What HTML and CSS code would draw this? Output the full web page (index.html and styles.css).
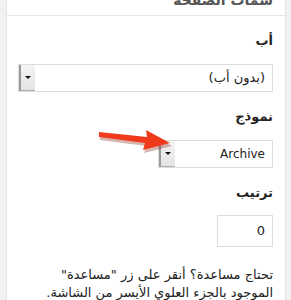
FILE: index.html
```html
<!DOCTYPE html>
<html lang="ar" dir="rtl">
<head>
    <meta charset="utf-8">
    <title>سمات الصفحة</title>
    <link rel="stylesheet" href="styles.css">
</head>
<body>
<div class="panel">
    <div class="panel-head">سمات الصفحة</div>
    <div class="panel-body">
        <p class="field-label">أب</p>
        <div class="select">
            <span class="select-text">(بدون أب)</span>
            <span class="select-btn"><i></i></span>
        </div>

        <p class="field-label">نموذج</p>
        <div class="select narrow">
            <span class="select-text latin" dir="ltr">Archive</span>
            <span class="select-btn"><i></i></span>
        </div>

        <p class="field-label">ترتيب</p>
        <div class="order-input">0</div>

        <p class="help">تحتاج مساعدة؟ أنقر على زر "مساعدة"<br>الموجود بالجزء العلوي الأيسر من الشاشة.</p>
    </div>

    <!-- annotation arrow drawn over the screenshot -->
    <svg class="arrow" width="80" height="30" viewBox="0 0 80 30">
        <polygon points="0,4 48,9 47,2 72,15 44,22 46,15 0,9" fill="#8c2a1a" opacity="0.35" transform="translate(1,2)"/>
        <polygon points="0,3 48,8 47,1 71,14 44,21 46,14 0,8" fill="#f03a1c"/>
    </svg>
</div>
</body>
</html>
```

FILE: styles.css
```css
body {
    margin: 0;
    background: #f1f1f1;
    font-family: "DejaVu Sans", sans-serif;
    font-size: 13px;
    color: #222;
    overflow: hidden;
}

.panel {
    position: relative;
    display: flow-root;
    margin: 0 5px 0 6px;
    background: #fff;
    border-left: 1px solid #e3e3e3;
    border-right: 1px solid #e3e3e3;
    height: 300px;
}

.panel-head {
    margin-top: -20px;
    height: 35px;
    line-height: 40px;
    padding: 0 12px;
    font-weight: bold;
    font-size: 14px;
    color: #555;
    border-bottom: 1px solid #e5e5e5;
    overflow: hidden;
}

.panel-body {
    padding: 0 12px 0 11px;
}

.field-label {
    margin: 15px 0 0;
    line-height: 20px;
    font-size: 13px;
    font-weight: bold;
    color: #222;
}

.select {
    display: flex;
    align-items: stretch;
    margin-top: 13px;
    height: 26px;
    border: 1px solid #ddd;
    background: #fff;
}
.select.narrow {
    width: 113px;
}

.select-text {
    flex: 1;
    line-height: 26px;
    padding: 0 7px;
    text-align: right;
}
.select-text.latin {
    font-size: 12px;
}

.select-btn {
    width: 14px;
    display: flex;
    align-items: center;
    justify-content: center;
    background: linear-gradient(#f4f4f4, #e4e4e4);
    border-left: 2px solid #9a9a9a;
    border-bottom: 1px solid #b0b0b0;
}
.select-btn i {
    width: 0;
    height: 0;
    border-left: 3px solid transparent;
    border-right: 3px solid transparent;
    border-top: 3px solid #111;
}

.order-input {
    margin-top: 12px;
    width: 47px;
    height: 30px;
    line-height: 30px;
    padding: 0 7px 0 0;
    border: 1px solid #ddd;
    text-align: right;
    font-size: 13px;
}

.help {
    margin: 19px 0 0;
    line-height: 18px;
    font-size: 13px;
    color: #222;
}

.arrow {
    position: absolute;
    left: 92px;
    top: 129px;
}
```
